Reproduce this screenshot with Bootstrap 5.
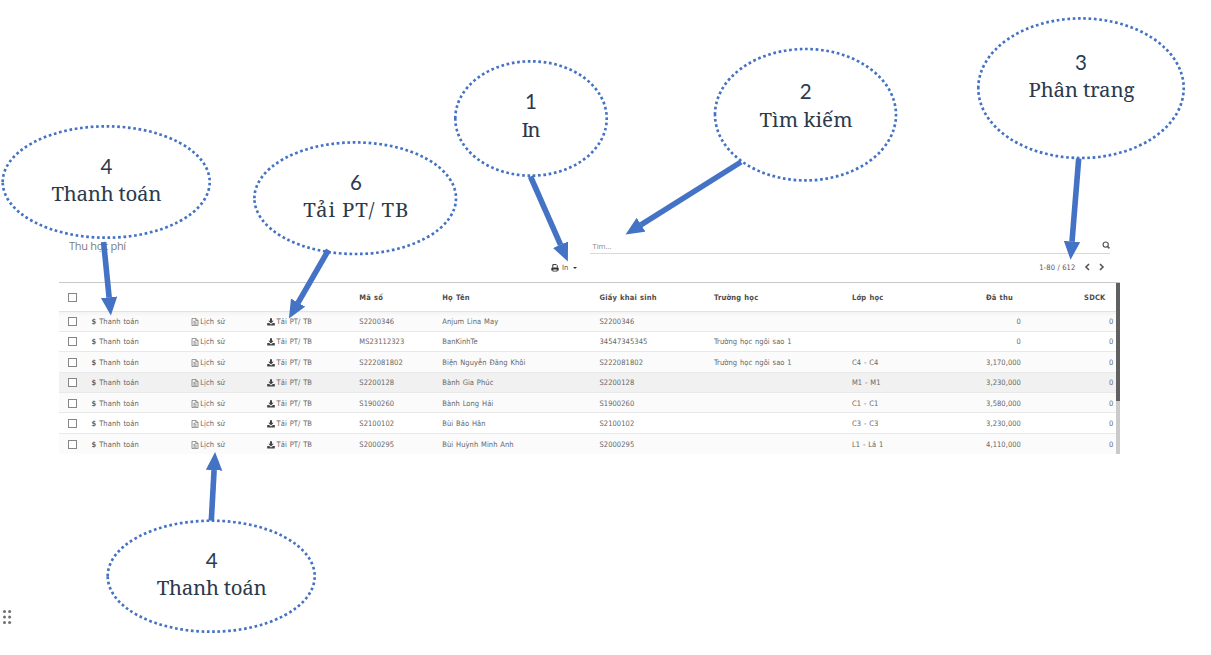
<!DOCTYPE html>
<html lang="vi">
<head>
<meta charset="utf-8">
<meta name="viewport" content="width=device-width, initial-scale=1">
<title>Thu học phí</title>
<link rel="stylesheet" href="https://cdn.jsdelivr.net/npm/bootstrap@5.3.0/dist/css/bootstrap.min.css">
<style>
  body { font-family: "DejaVu Sans Condensed", "DejaVu Sans", sans-serif; font-stretch: condensed; font-size: 7.5px; line-height: 12px; color: #666; background: #fff; height: 655px; overflow: hidden; }
  .fee-panel { width: 1061px; margin-left: 59px; padding-top: 236px; }
  .fee-head { height: 46px; }
  .fee-title { font: 11px/19px "Open Sans", "Noto Sans", sans-serif; color: #7c7c7c; padding-left: 10px; letter-spacing: -.3px; }
  .search-line { width: 520.5px; height: 18px; border-bottom: 1px solid #d9d9d9; padding: 4px 0 0 3px; margin-right: 10px; font: 7.5px/12px "Open Sans", "Noto Sans", sans-serif; color: #8a8a8a; }
  .search-line svg { margin-top: 1px; }
  .tool-line { width: 569px; height: 14px; margin-top: 6.5px; color: #555; }
  .caret-down { border: 2px solid transparent; border-top-color: #333; border-bottom: 0; margin-left: 5px; }
  .fee-list { border-top: 1px solid #c9c9c9; height: 172px; overflow: hidden; }
  .fee-table { display: block; width: 1057px; letter-spacing: .06px; word-spacing: .6px; }
  .fee-table tr { display: grid; grid-template-columns: 32.5px 99.8px 75.8px 92.2px 83px 157.2px 114.5px 138px 169px 92.5px; height: 20.4px; align-items: center; border-bottom: 1px solid #e9e9e9; padding-top: 1.6px; }
  .fee-table thead, .fee-table tbody { display: block; }
  .fee-table thead tr { height: 28.5px; border-bottom-color: #e2e2e2; color: #4c4c4c; padding-top: 2.5px; letter-spacing: .18px; }
  .fee-table tbody tr:nth-child(odd) { background: #fbfbfb; }
  .fee-table tbody tr:nth-child(4) { background: #f1f1f1; }
  .fee-table tbody tr:first-child { background: linear-gradient(#f4f4f4, #fbfbfb 5px); }
  .fee-table tbody tr:last-child { border-bottom: 0; }
  .fee-table td, .fee-table th { white-space: nowrap; padding: 0; }
  .fee-table td:first-child, .fee-table th:first-child { padding-left: 9px; }
  .fee-table th.num { padding-right: 8px; }
  .tick { display: block; width: 9px; height: 9px; border: 1px solid #858585; background: #fff; margin-bottom: 1px; }
  .scroll-track { width: 4px; background: #cacaca; }
  .scroll-thumb { height: 118px; background: #606060; }
  .notes { left: 0; top: 0; pointer-events: none; }
  .notes .ring { fill: none; stroke: #4472c4; stroke-width: 2.67; stroke-dasharray: 2.67 2.67; }
  .notes .shaft { stroke: #4472c4; stroke-width: 5.6; }
  .notes text { fill: #2c3a4d; text-anchor: middle; font-family: "Noto Serif", "DejaVu Serif Condensed", "DejaVu Serif", serif; font-size: 20.5px; }
  .notes .no { font-family: Lato, "Noto Sans", sans-serif; font-size: 20.5px; font-stretch: normal; }
</style>
</head>
<body>
<main class="fee-panel">
  <header class="fee-head d-flex justify-content-between">
    <div class="fee-title">Thu học phí</div>
    <div class="d-flex flex-column align-items-end">
      <div class="search-line d-flex justify-content-between align-items-start">
        <span>Tìm...</span>
        <svg width="8" height="8" viewBox="0 0 8 8" fill="none" stroke="#555"><circle cx="3.7" cy="3.6" r="2.6" stroke-width="1.2"/><path d="M5.4 5.4 7.4 7.4" stroke-width="1.5"/></svg>
      </div>
      <div class="tool-line d-flex justify-content-between align-items-center">
        <div class="d-flex align-items-center">
          <svg width="8" height="8" style="margin-right:3px" viewBox="0 0 8 8"><path d="M1.8 3.6V.6h3.5l1 1v2" fill="none" stroke="#333"/><path d="M.3 4.4q0-1 1-1h5.4q1 0 1 1v2.2H6.4v1H1.6v-1H.3z" fill="#333"/><path d="M2.3 5.5h3.4v1.2H2.3z" fill="#fff"/></svg>
          <span>In</span><span class="caret-down"></span>
        </div>
        <div class="d-flex align-items-center" style="padding-right:15.5px">
          <span style="letter-spacing:.16px">1-80 / 612</span>
          <svg style="margin:0 0 2px 8px" width="21" height="8" viewBox="0 0 21 8" fill="none" stroke="#555" stroke-width="1.6"><path d="M5 1 2 4l3 3M16 1l3 3-3 3"/></svg>
        </div>
      </div>
    </div>
  </header>
  <section class="fee-list d-flex">
    <table class="fee-table">
      <thead><tr><th><span class="tick"></span></th><th></th><th></th><th></th><th>Mã số</th><th>Họ Tên</th><th>Giấy khai sinh</th><th>Trường học</th><th class="d-flex justify-content-between num"><span>Lớp học</span><span>Đã thu</span></th><th class="text-end num">SDCK</th></tr></thead>
      <tbody></tbody>
    </table>
    <div class="scroll-track"><div class="scroll-thumb"></div></div>
  </section>
</main>

<svg class="notes position-absolute" width="1211" height="655">
  <defs><marker id="tip" markerUnits="userSpaceOnUse" markerWidth="20" markerHeight="17" refX=".2" refY="8.2" orient="auto"><path d="M0 0 18.3 8.2 0 16.4z" fill="#4472c4"/></marker></defs>
  <g class="ring">
    <path d="M2.7 182a103.5 55.7 0 0 1 207 0a103.5 55.7 0 0 1-207 0"/>
    <path d="M254.4 198.2a100.8 55.8 0 0 1 201.6 0a100.8 55.8 0 0 1-201.6 0"/>
    <path d="M455.3 118.5a75.7 57.2 0 0 1 151.4 0a75.7 57.2 0 0 1-151.4 0"/>
    <path d="M715 114.7a90.5 65.7 0 0 1 181 0a90.5 65.7 0 0 1-181 0"/>
    <path d="M978.3 88.2a102.7 69.8 0 0 1 205.4 0a102.7 69.8 0 0 1-205.4 0"/>
    <path d="M107.7 576.2a103.5 55.5 0 0 1 207 0a103.5 55.5 0 0 1-207 0"/>
  </g>
  <g class="shaft">
    <path marker-end="url(#tip)" d="M103.6 242 109.1 297.4"/>
    <path marker-end="url(#tip)" d="M328.5 250 298 302.8"/>
    <path marker-end="url(#tip)" d="M530.5 176.5 560.6 244.9"/>
    <path marker-end="url(#tip)" d="M741 162 640.9 224.8"/>
    <path marker-end="url(#tip)" d="M1078.7 158.5 1072 241.7"/>
    <path marker-end="url(#tip)" d="M211.3 520.7 214.1 470"/>
  </g>
  <text class="no" x="106.5" y="174">4</text><text x="106.5" y="201" textLength="110">Thanh toán</text>
  <text class="no" x="356" y="190">6</text><text x="355.8" y="217" textLength="105">Tải PT/ TB</text>
  <text class="no" x="531" y="109">1</text><text x="531" y="137" textLength="19">In</text>
  <text class="no" x="805.7" y="99">2</text><text x="806" y="127" textLength="93">Tìm kiếm</text>
  <text class="no" x="1081" y="70">3</text><text x="1081.5" y="97" textLength="106">Phân trang</text>
  <text class="no" x="211.7" y="568">4</text><text x="211.7" y="595" textLength="110">Thanh toán</text>
  <g fill="#6f6f6f"><circle cx="4.5" cy="611.5" r="1.5"/><circle cx="9.6" cy="611.5" r="1.5"/><circle cx="4.5" cy="617" r="1.5"/><circle cx="9.6" cy="617" r="1.5"/><circle cx="4.5" cy="622.4" r="1.5"/><circle cx="9.6" cy="622.4" r="1.5"/></g>
</svg>

<script src="https://cdn.jsdelivr.net/npm/bootstrap@5.3.0/dist/js/bootstrap.bundle.min.js"></script>
<script>
  const students = [
    ['S2200346', 'Anjum Lina May', 'S2200346', '', '', '0'],
    ['MS23112323', 'BanKinhTe', '34547345345', 'Trường học ngôi sao 1', '', '0'],
    ['S222081802', 'Biện Nguyễn Đăng Khôi', 'S222081802', 'Trường học ngôi sao 1', 'C4 - C4', '3,170,000'],
    ['S2200128', 'Bành Gia Phúc', 'S2200128', '', 'M1 - M1', '3,230,000'],
    ['S1900260', 'Bành Long Hải', 'S1900260', '', 'C1 - C1', '3,580,000'],
    ['S2100102', 'Bùi Bảo Hân', 'S2100102', '', 'C3 - C3', '3,230,000'],
    ['S2000295', 'Bùi Huỳnh Minh Anh', 'S2000295', '', 'L1 - Lá 1', '4,110,000']
  ];
  const fileIcon = '<svg width="8" height="8" viewBox="0 0 8 8" fill="none" stroke="#777" stroke-width=".8"><path d="M1 .4h3.9L7 2.5v5.1H1zM4.8.4v2.2H7M2.4 3.4h2M2.4 4.8h3.2M2.4 6.2h3.2"/></svg>';
  const loadIcon = '<svg width="8" height="8" viewBox="0 0 8 8" fill="#444"><path d="M3 .3h2v2.5h1.7L4 5.5 1.3 2.8H3zM.2 5h2l1.8 1.4L5.8 5h2v2.5H.2z"/></svg>';
  document.querySelector('tbody').innerHTML = students.map(s => `
    <tr><td><span class="tick"></span></td>
    <td class="d-flex"><b class="fw-semibold" style="width:7.7px">$</b><span>Thanh toán</span></td>
    <td><span class="d-flex align-items-center">${fileIcon}<span style="padding-left:1px">Lịch sử</span></span></td>
    <td><span class="d-flex align-items-center">${loadIcon}<span style="padding-left:1.5px">Tải PT/ TB</span></span></td>
    <td>${s[0]}</td><td>${s[1]}</td><td>${s[2]}</td><td>${s[3]}</td>
    <td class="d-flex justify-content-between"><span>${s[4]}</span><span>${s[5]}</span></td>
    <td class="text-end">0</td></tr>`).join('');
</script>
</body>
</html>
